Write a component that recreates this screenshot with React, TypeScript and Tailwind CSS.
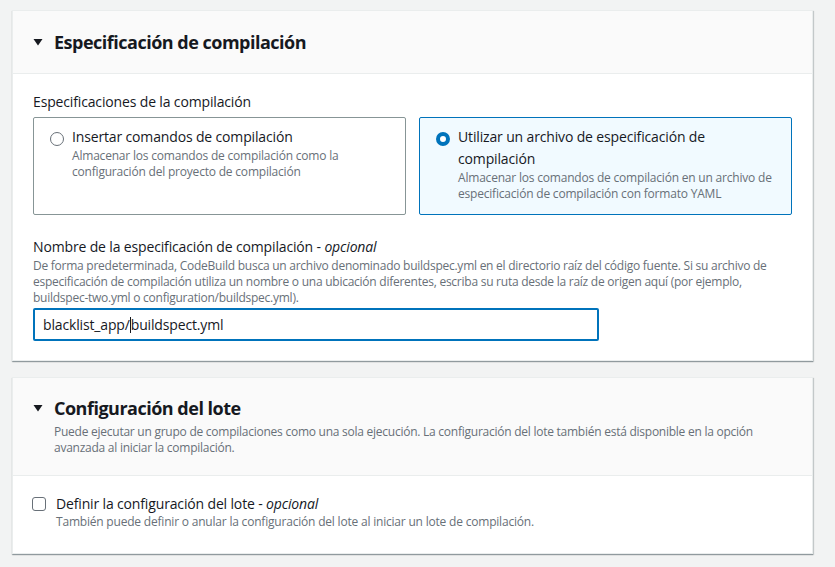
import React from 'react'

const font = { fontFamily: '"Open Sans", "Noto Sans", sans-serif' }

function Caret() {
  return (
    <svg width="10" height="10" viewBox="0 0 10 10" className="shrink-0">
      <path d="M0.5 2 L9.5 2 L5 8.5 Z" fill="#16191f" />
    </svg>
  )
}

function Radio({ checked }: { checked: boolean }) {
  return checked ? (
    <span className="mt-[6px] box-border h-[14px] w-[14px] shrink-0 rounded-full border-[4px] border-[#0073bb] bg-white" />
  ) : (
    <span className="mt-[6px] box-border h-[14px] w-[14px] shrink-0 rounded-full border border-[#687078] bg-white" />
  )
}

export default function App() {
  return (
    <div className="min-h-[567px] w-[835px] bg-[#f2f3f3] pt-[10px] text-[#16191f]" style={font}>
      {/* ===== Especificación de compilación ===== */}
      <section className="ml-[12px] w-[801px] border border-[#eaeded] bg-white shadow-[0_1px_1px_0_rgba(0,28,36,0.3),1px_1px_1px_0_rgba(0,28,36,0.15)]">
        <div className="flex h-[63px] items-center gap-[11px] border-b border-[#eaeded] bg-[#fafafa] pl-[20px]">
          <Caret />
          <h2 className="text-[18px] font-bold leading-[22px] tracking-[-0.5px]">Especificación de compilación</h2>
        </div>

        <div className="px-[20px] pb-[19px] pt-[17px]">
          <p className="text-[14px] leading-[22px] tracking-[-0.15px]">Especificaciones de la compilación</p>
          <div className="mt-[4px] grid grid-cols-2 gap-[13px]">
            <div className="flex h-[98px] gap-[8px] rounded-[2px] border border-[#879596] bg-white pl-[16px] pt-[8px]">
              <Radio checked={false} />
              <div>
                <p className="text-[14px] leading-[22px] tracking-[-0.15px]">Insertar comandos de compilación</p>
                <p className="text-[12px] leading-[16px] tracking-[-0.2px] text-[#687078]">
                  Almacenar los comandos de compilación como la
                  <br />
                  configuración del proyecto de compilación
                </p>
              </div>
            </div>
            <div className="flex h-[98px] gap-[8px] rounded-[2px] border border-[#0073bb] bg-[#f1faff] pl-[16px] pt-[8px]">
              <Radio checked />
              <div>
                <p className="text-[14px] leading-[22px] tracking-[-0.15px]">
                  Utilizar un archivo de especificación de
                  <br />
                  compilación
                </p>
                <p className="text-[12px] leading-[16px] tracking-[-0.2px] text-[#687078]">
                  Almacenar los comandos de compilación en un archivo de
                  <br />
                  especificación de compilación con formato YAML
                </p>
              </div>
            </div>
          </div>

          <div className="mt-[21px]">
            <p className="text-[14px] leading-[22px] tracking-[-0.15px]">
              Nombre de la especificación de compilación - <i>opcional</i>
            </p>
            <p className="whitespace-nowrap text-[12px] leading-[16px] tracking-[-0.25px] text-[#687078]">
              De forma predeterminada, CodeBuild busca un archivo denominado buildspec.yml en el directorio raíz del código fuente. Si su archivo de
              <br />
              especificación de compilación utiliza un nombre o una ubicación diferentes, escriba su ruta desde la raíz de origen aquí (por ejemplo,
              <br />
              buildspec-two.yml o configuration/buildspec.yml).
            </p>
            <div className="mt-[2px] flex h-[33px] w-[566px] items-center rounded-[2px] border-2 border-[#0073bb] bg-white pl-[8px] text-[14px] tracking-[-0.15px]">
              <span>blacklist_app/</span>
              <span className="h-[16px] w-px bg-[#16191f]" />
              <span>buildspect.yml</span>
            </div>
          </div>
        </div>
      </section>

      {/* ===== Configuración del lote ===== */}
      <section className="ml-[12px] mt-[16px] w-[801px] border border-[#eaeded] bg-white shadow-[0_1px_1px_0_rgba(0,28,36,0.3),1px_1px_1px_0_rgba(0,28,36,0.15)]">
        <div className="border-b border-[#eaeded] bg-[#fafafa] pb-[19px] pl-[20px] pt-[18px]">
          <div className="flex items-center gap-[11px]">
            <Caret />
            <h2 className="text-[18px] font-bold leading-[24px] tracking-[-0.5px]">Configuración del lote</h2>
          </div>
          <p className="mt-[4px] pl-[21px] text-[12px] leading-[16px] tracking-[-0.25px] text-[#687078]">
            Puede ejecutar un grupo de compilaciones como una sola ejecución. La configuración del lote también está disponible en la opción
            <br />
            avanzada al iniciar la compilación.
          </p>
        </div>
        <div className="flex gap-[10px] pb-[22px] pl-[19px] pt-[19px]">
          <span className="mt-[2px] box-border h-[14px] w-[14px] shrink-0 rounded-[3px] border border-[#687078] bg-white" />
          <div>
            <p className="text-[14px] leading-[18px] tracking-[-0.15px]">
              Definir la configuración del lote - <i>opcional</i>
            </p>
            <p className="text-[12px] leading-[18px] tracking-[-0.2px] text-[#687078]">
              También puede definir o anular la configuración del lote al iniciar un lote de compilación.
            </p>
          </div>
        </div>
      </section>
    </div>
  )
}
